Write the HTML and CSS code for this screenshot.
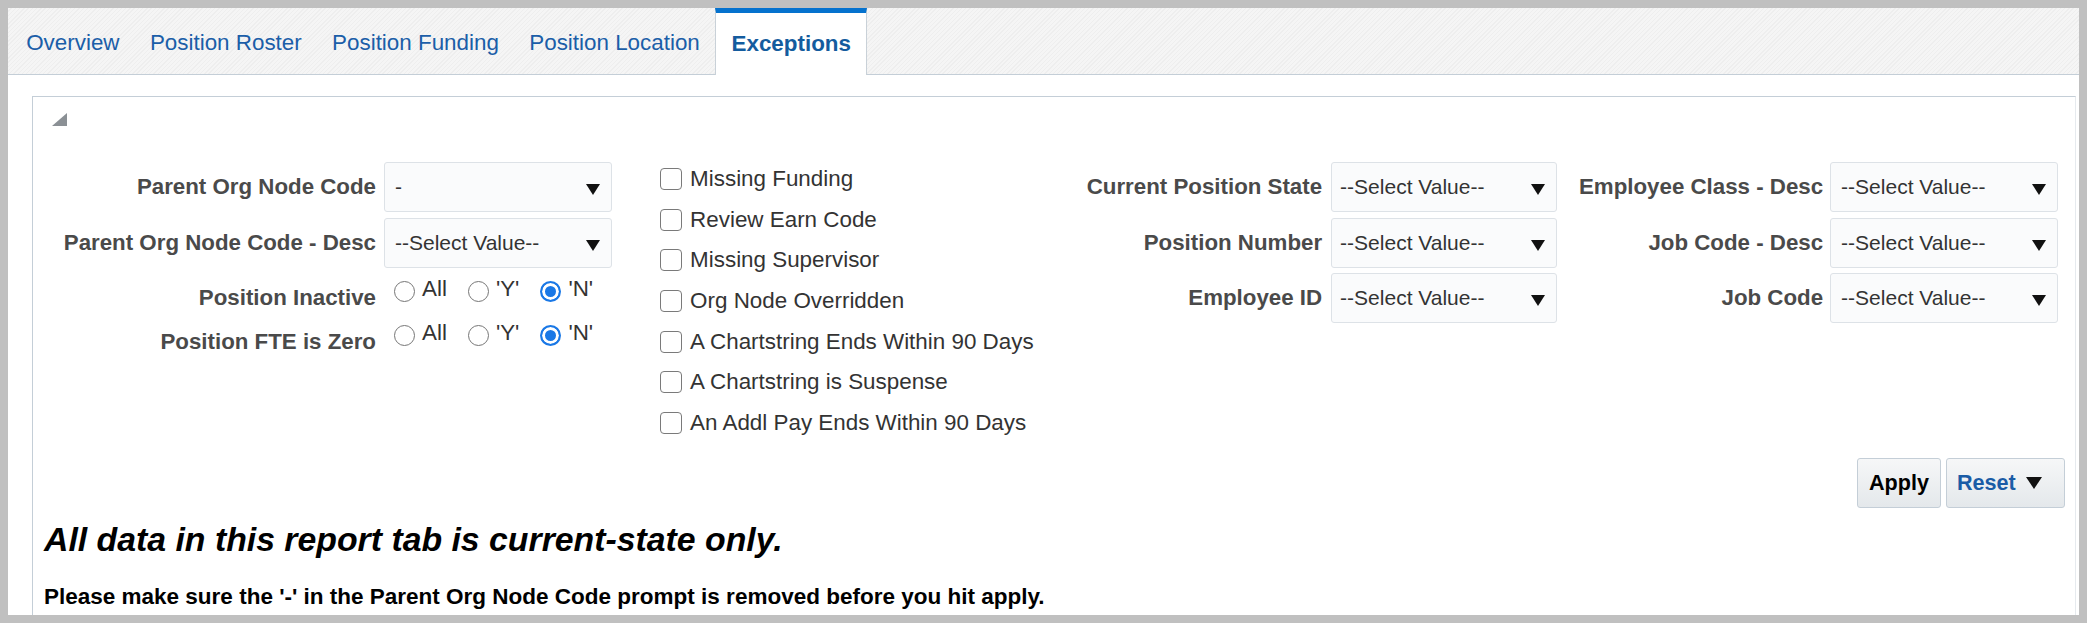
FILE: index.html
```html
<!DOCTYPE html>
<html lang="en">
<head>
    <meta charset="UTF-8">
    <meta name="viewport" content="width=device-width, initial-scale=1.0">
    <title>Position Exceptions</title>
    <link rel="stylesheet" href="styles.css">
</head>
<body>
    <div class="page">
        <!-- Tab strip -->
        <div class="tabs">
            <a class="tab">Overview</a>
            <a class="tab">Position Roster</a>
            <a class="tab">Position Funding</a>
            <a class="tab">Position Location</a>
            <a class="tab active">Exceptions</a>
        </div>

        <div class="panel">
            <div class="prompt-box">
                <span class="toggle"></span>

                <div class="prompts">
                    <!-- Org node + radio prompts -->
                    <div class="col col-left">
                        <div class="frow">
                            <label>Parent Org Node Code</label>
                            <div class="select">-</div>
                        </div>
                        <div class="frow">
                            <label>Parent Org Node Code - Desc</label>
                            <div class="select">--Select Value--</div>
                        </div>
                        <div class="frow radio-row">
                            <label>Position Inactive</label>
                            <div class="radios">
                                <span class="opt"><input type="radio" name="inactive"><span>All</span></span>
                                <span class="opt"><input type="radio" name="inactive"><span>'Y'</span></span>
                                <span class="opt"><input type="radio" name="inactive" checked><span>'N'</span></span>
                            </div>
                        </div>
                        <div class="frow radio-row">
                            <label>Position FTE is Zero</label>
                            <div class="radios">
                                <span class="opt"><input type="radio" name="fte"><span>All</span></span>
                                <span class="opt"><input type="radio" name="fte"><span>'Y'</span></span>
                                <span class="opt"><input type="radio" name="fte" checked><span>'N'</span></span>
                            </div>
                        </div>
                    </div>

                    <!-- Exception checkboxes -->
                    <div class="checks">
                        <label class="check"><input type="checkbox"><span>Missing Funding</span></label>
                        <label class="check"><input type="checkbox"><span>Review Earn Code</span></label>
                        <label class="check"><input type="checkbox"><span>Missing Supervisor</span></label>
                        <label class="check"><input type="checkbox"><span>Org Node Overridden</span></label>
                        <label class="check"><input type="checkbox"><span>A Chartstring Ends Within 90 Days</span></label>
                        <label class="check"><input type="checkbox"><span>A Chartstring is Suspense</span></label>
                        <label class="check"><input type="checkbox"><span>An Addl Pay Ends Within 90 Days</span></label>
                    </div>

                    <div class="col col-mid">
                        <div class="frow">
                            <label>Current Position State</label>
                            <div class="select">--Select Value--</div>
                        </div>
                        <div class="frow">
                            <label>Position Number</label>
                            <div class="select">--Select Value--</div>
                        </div>
                        <div class="frow">
                            <label>Employee ID</label>
                            <div class="select">--Select Value--</div>
                        </div>
                    </div>

                    <div class="col col-right">
                        <div class="frow">
                            <label>Employee Class - Desc</label>
                            <div class="select">--Select Value--</div>
                        </div>
                        <div class="frow">
                            <label>Job Code - Desc</label>
                            <div class="select">--Select Value--</div>
                        </div>
                        <div class="frow">
                            <label>Job Code</label>
                            <div class="select">--Select Value--</div>
                        </div>
                    </div>
                </div>

                <div class="actions">
                    <button class="btn apply">Apply</button>
                    <button class="btn reset">Reset</button>
                </div>

                <h2 class="notice">All data in this report tab is current-state only.</h2>
                <p class="hint">Please make sure the '-' in the Parent Org Node Code prompt is removed before you hit apply.</p>
            </div>
        </div>
    </div>
</body>
</html>
```

FILE: styles.css
```css
/* Page frame */
html, body {
    margin: 0;
    padding: 0;
}

body {
    background: #c0c0c0;
    padding: 8px;
    height: 623px;
    box-sizing: border-box;
    overflow: hidden;
    font-family: "Liberation Sans", Arial, sans-serif;
    color: #333;
}

.page {
    background: #fff;
    height: 607px;
    overflow: hidden;
}

/* Tabs */
.tabs {
    display: flex;
    height: 66px;
    padding-left: 3px;
    background: repeating-linear-gradient(-45deg, #f5f5f5 0, #f5f5f5 2px, #eeeeee 2px, #eeeeee 3px);
    border-bottom: 1px solid #c4ced7;
}

.tab {
    display: flex;
    align-items: center;
    padding: 0 14.2px;
    border: 1px solid transparent;
    border-top: 5px solid transparent;
    font-size: 22.4px;
    color: #1b5ea8;
    text-decoration: none;
    white-space: nowrap;
}

.tab.active {
    padding: 0 15.5px;
    background: #fff;
    border-color: #c9d1d8;
    border-top-color: #0572ce;
    border-bottom: none;
    margin-bottom: -1px;
    font-weight: bold;
    color: #145c9e;
}

/* Prompt panel */
.panel {
    padding: 21px 3px 0 24px;
}

.prompt-box {
    border: 1px solid #c4ced7;
    border-right-color: #e6eaee;
    height: 600px;
}

.toggle {
    display: block;
    width: 0;
    height: 0;
    margin: 16px 0 0 19px;
    border-left: 15px solid transparent;
    border-bottom: 13px solid #8b9095;
}

.prompts {
    display: flex;
    align-items: flex-start;
    margin-top: 36px;
}

.col {
    flex: none;
}

.frow {
    display: flex;
    align-items: center;
    height: 50px;
    margin-bottom: 5.5px;
}

.frow label {
    flex: none;
    text-align: right;
    font-size: 22.3px;
    font-weight: bold;
    color: #4a4a4a;
    white-space: nowrap;
}

.col-left label { width: 343px; margin-right: 8px; }
.col-mid label { width: 262px; margin-right: 9px; }
.col-right label { width: 266px; margin-right: 7px; }

.select {
    display: flex;
    align-items: center;
    justify-content: space-between;
    width: 228px;
    height: 50px;
    box-sizing: border-box;
    padding: 0 11px 0 10px;
    border: 1px solid #dde2e7;
    border-radius: 3px;
    background: #fafbfc;
    font-size: 21px;
    color: #333;
}

.col-mid .select {
    width: 226px;
    padding-left: 8px;
}

.select::after {
    content: "";
    width: 0;
    height: 0;
    margin-top: 5px;
    border-left: 7.5px solid transparent;
    border-right: 7.5px solid transparent;
    border-top: 11px solid #111;
}

/* Radio rows */
.frow.radio-row {
    height: 42px;
    margin-bottom: 2px;
}

.radio-row label {
    padding-top: 7px;
}

.radios {
    display: flex;
    align-items: center;
    margin-left: 10px;
    padding-bottom: 6px;
}

.opt {
    display: flex;
    align-items: center;
    margin-right: 21px;
    font-size: 22.4px;
    color: #333;
}

.opt span {
    margin-left: 7px;
    margin-bottom: 5px;
}

input[type="radio"] {
    appearance: none;
    -webkit-appearance: none;
    width: 21px;
    height: 21px;
    margin: 0;
    border: 1px solid #767676;
    border-radius: 50%;
    background: #fff;
}

input[type="radio"]:checked {
    border: 2px solid #1a78e6;
    background: #1a78e6;
    box-shadow: inset 0 0 0 3px #fff;
}

/* Checkbox list */
.checks {
    flex: none;
    width: 400px;
    margin-left: 46px;
    margin-top: -3.3px;
}

.check {
    display: flex;
    align-items: center;
    height: 40.67px;
    font-size: 22.4px;
    color: #333;
    white-space: nowrap;
}

input[type="checkbox"] {
    appearance: none;
    -webkit-appearance: none;
    flex: none;
    width: 22px;
    height: 22px;
    margin: 0 8px 0 0;
    border: 1.5px solid #7a7a7a;
    border-radius: 4px;
    background: #fff;
    box-sizing: border-box;
}

/* Apply / Reset */
.actions {
    display: flex;
    justify-content: flex-end;
    gap: 5px;
    margin: 14.6px 10px 0 0;
}

.btn {
    display: flex;
    align-items: center;
    height: 50px;
    box-sizing: border-box;
    border: 1px solid #c4ced7;
    border-radius: 3px;
    background: linear-gradient(#f6f7f8, #e4e8eb);
    font-family: inherit;
    font-size: 21.6px;
    font-weight: bold;
}

.apply {
    width: 84px;
    justify-content: center;
    padding: 0;
    color: #000;
}

.reset {
    width: 119px;
    padding: 0 0 0 10px;
    color: #1a5ca6;
}

.reset::after {
    content: "";
    width: 0;
    height: 0;
    margin-left: 10px;
    border-left: 8px solid transparent;
    border-right: 8px solid transparent;
    border-top: 12px solid #111;
}

/* Notes */
.notice {
    margin: 11px 0 0 11px;
    font-size: 33.8px;
    font-weight: bold;
    font-style: italic;
    line-height: 40px;
    color: #000;
}

.hint {
    margin: 24px 0 0 11px;
    font-size: 22.5px;
    font-weight: bold;
    line-height: 28px;
    color: #000;
}
```
